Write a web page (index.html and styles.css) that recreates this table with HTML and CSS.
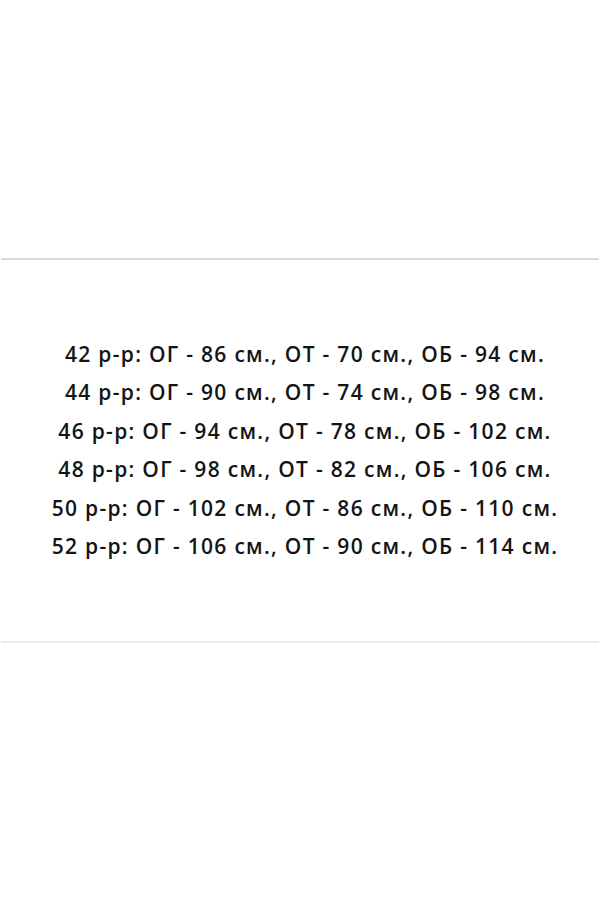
FILE: index.html
```html
<!DOCTYPE html>
<html lang="ru">
<head>
    <meta charset="UTF-8">
    <meta name="viewport" content="width=device-width, initial-scale=1.0">
    <title>Размеры</title>
    <link rel="stylesheet" href="styles.css">
</head>
<body>
    <div class="page">
        <hr class="rule rule-top">
        <div class="sizes">
            <p>42 р-р: ОГ - 86 см., ОТ - 70 см., ОБ - 94 см.</p>
            <p>44 р-р: ОГ - 90 см., ОТ - 74 см., ОБ - 98 см.</p>
            <p>46 р-р: ОГ - 94 см., ОТ - 78 см., ОБ - 102 см.</p>
            <p>48 р-р: ОГ - 98 см., ОТ - 82 см., ОБ - 106 см.</p>
            <p>50 р-р: ОГ - 102 см., ОТ - 86 см., ОБ - 110 см.</p>
            <p>52 р-р: ОГ - 106 см., ОТ - 90 см., ОБ - 114 см.</p>
        </div>
        <hr class="rule rule-bottom">
    </div>
</body>
</html>
```

FILE: styles.css
```css
body {
    margin: 0;
    background-color: #fff;
    font-family: "Open Sans", "Liberation Sans", sans-serif;
    color: #141414;
}
.page {
    width: 600px;
    height: 900px;
    padding-top: 258px;
    box-sizing: border-box;
}
.rule {
    margin: 0 1px;
    border: none;
    height: 2px;
}
.rule-top {
    background-color: #d9d9d9;
}
.rule-bottom {
    background-color: #ececec;
}
.sizes {
    padding: 75px 0 76px 10px;
    text-align: center;
}
.sizes p {
    margin: 0;
    font-size: 21px;
    font-weight: 600;
    line-height: 38.4px;
    letter-spacing: 1.3px;
}
```
